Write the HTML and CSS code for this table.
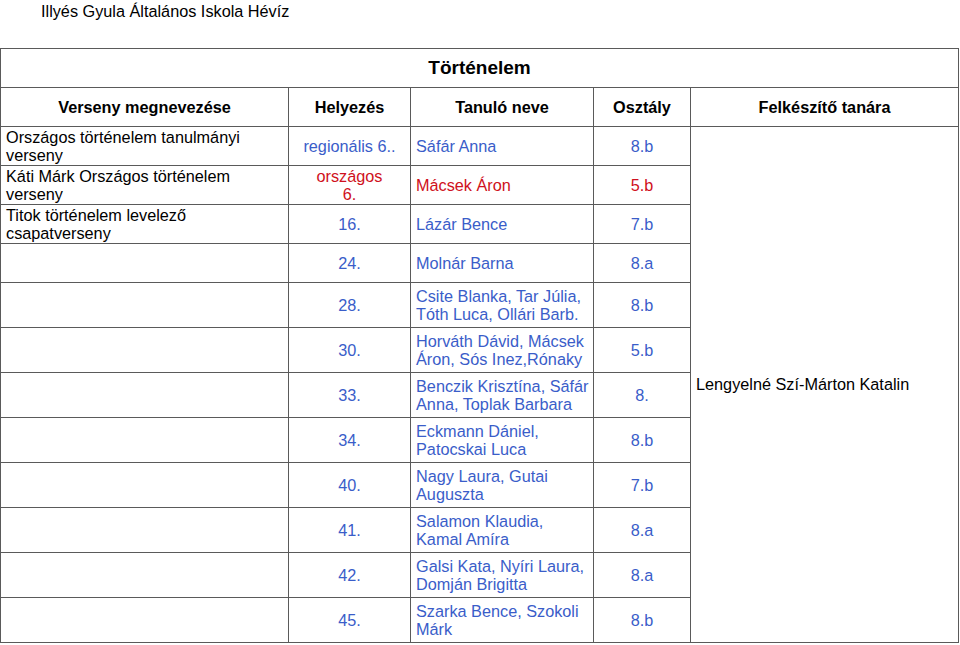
FILE: index.html
```html
<!DOCTYPE html>
<html lang="hu">
<head>
<meta charset="utf-8">
<title>Történelem</title>
<link rel="stylesheet" href="styles.css">
</head>
<body>
<div class="school">Illyés Gyula Általános Iskola Hévíz</div>
<table class="results">
  <colgroup>
    <col class="c1"><col class="c2"><col class="c3"><col class="c4"><col class="c5">
  </colgroup>
  <tr class="r-title"><th colspan="5" class="title">Történelem</th></tr>
  <tr class="r-head">
    <th>Verseny megnevezése</th><th>Helyezés</th><th>Tanuló neve</th><th>Osztály</th><th>Felkészítő tanára</th>
  </tr>
  <tr class="r1">
    <td class="comp">Országos történelem tanulmányi<br>verseny</td>
    <td class="place blue">regionális 6..</td>
    <td class="name blue">Sáfár Anna</td>
    <td class="cls blue">8.b</td>
    <td class="teacher" rowspan="12">Lengyelné Szí-Márton Katalin</td>
  </tr>
  <tr class="r1">
    <td class="comp">Káti Márk Országos történelem<br>verseny</td>
    <td class="place red">országos<br>6.</td>
    <td class="name red">Mácsek Áron</td>
    <td class="cls red">5.b</td>
  </tr>
  <tr class="r1">
    <td class="comp">Titok történelem levelező<br>csapatverseny</td>
    <td class="place blue">16.</td>
    <td class="name blue">Lázár Bence</td>
    <td class="cls blue">7.b</td>
  </tr>
  <tr class="r1">
    <td class="comp"></td>
    <td class="place blue">24.</td>
    <td class="name blue">Molnár Barna</td>
    <td class="cls blue">8.a</td>
  </tr>
  <tr class="r2">
    <td class="comp"></td>
    <td class="place blue">28.</td>
    <td class="name blue">Csite Blanka, Tar Júlia,<br>Tóth Luca, Ollári Barb.</td>
    <td class="cls blue">8.b</td>
  </tr>
  <tr class="r2">
    <td class="comp"></td>
    <td class="place blue">30.</td>
    <td class="name blue">Horváth Dávid, Mácsek<br>Áron, Sós Inez,Rónaky</td>
    <td class="cls blue">5.b</td>
  </tr>
  <tr class="r2">
    <td class="comp"></td>
    <td class="place blue">33.</td>
    <td class="name blue">Benczik Krisztína, Sáfár<br>Anna, Toplak Barbara</td>
    <td class="cls blue">8.</td>
  </tr>
  <tr class="r2">
    <td class="comp"></td>
    <td class="place blue">34.</td>
    <td class="name blue">Eckmann Dániel,<br>Patocskai Luca</td>
    <td class="cls blue">8.b</td>
  </tr>
  <tr class="r2">
    <td class="comp"></td>
    <td class="place blue">40.</td>
    <td class="name blue">Nagy Laura, Gutai<br>Auguszta</td>
    <td class="cls blue">7.b</td>
  </tr>
  <tr class="r2">
    <td class="comp"></td>
    <td class="place blue">41.</td>
    <td class="name blue">Salamon Klaudia,<br>Kamal Amíra</td>
    <td class="cls blue">8.a</td>
  </tr>
  <tr class="r2">
    <td class="comp"></td>
    <td class="place blue">42.</td>
    <td class="name blue">Galsi Kata, Nyíri Laura,<br>Domján Brigitta</td>
    <td class="cls blue">8.a</td>
  </tr>
  <tr class="r2">
    <td class="comp"></td>
    <td class="place blue">45.</td>
    <td class="name blue">Szarka Bence, Szokoli<br>Márk</td>
    <td class="cls blue">8.b</td>
  </tr>
</table>
</body>
</html>
```
FILE: styles.css
```css
html, body {
  margin: 0;
  padding: 0;
  background: #ffffff;
}
body {
  font-family: "Liberation Sans", Arial, sans-serif;
  font-size: 16.25px;
  color: #000;
}
.school {
  padding: 2px 0 0 41px;
  height: 48px;
  box-sizing: border-box;
  line-height: 18px;
}
.results {
  border-collapse: collapse;
  table-layout: fixed;
  width: 958px;
  margin-left: 0;
}
.c1 { width: 288px; }
.c2 { width: 122px; }
.c3 { width: 183px; }
.c4 { width: 97px; }
.c5 { width: 268px; }
.results th,
.results td {
  border: 1px solid #5a5a5a;
  padding: 0 5px;
  vertical-align: middle;
  line-height: 18.4px;
}
.results th {
  font-weight: bold;
  text-align: center;
}
.title {
  font-size: 19px;
}
.r-title { height: 39px; }
.r-head { height: 39px; }
.r1 { height: 39px; }
.r2 { height: 45px; }
.comp { text-align: left; white-space: nowrap; }
.place { text-align: center; white-space: nowrap; }
.name { text-align: left; white-space: nowrap; }
.cls { text-align: center; }
.teacher { text-align: left; padding-left: 6px; }
.blue { color: #3a5dc9; }
.red { color: #cf1020; }
```
